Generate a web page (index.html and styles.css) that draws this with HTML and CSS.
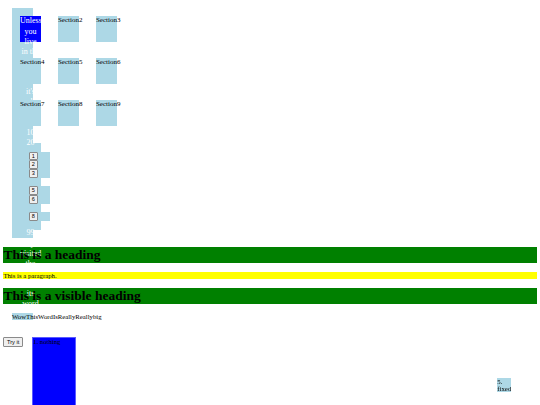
FILE: index.html
```html
<!DOCTYPE html>
<html>
<head>
<meta charset="utf-8">
<title>Layout tests</title>
<link rel="stylesheet" href="styles.css">
</head>
<body>
<div class="box col">
  <div class="grid">
    <div class="cell first">Unless<br>you<br>live<br>in the<br>Netherlands<br>or<br>nearby<br>it's<br>probably<br>not<br>between<br>10<br>20<br><br><br><br><br><br><br><br><br>99<br>days<br>visited<br>the<br><br><br>its<br>word</div>
    <div class="cell">Section2</div>
    <div class="cell">Section3</div>
    <div class="cell">Section4</div>
    <div class="cell">Section5</div>
    <div class="cell">Section6</div>
    <div class="cell">Section7</div>
    <div class="cell">Section8</div>
    <div class="cell">Section9</div>
  </div>
  <div class="lists">
    <div class="group"><button class="num">1</button><button class="num">2</button><button class="num">3</button></div>
    <div class="group"><button class="num">5</button><button class="num">6</button></div>
    <div class="group"><button class="num">8</button></div>
  </div>
</div>
<h1 class="heading">This is a heading</h1>
<p class="para">This is a paragraph.</p>
<h1 class="heading">This is a visible heading</h1>
<div class="box word">WowThisWordIsReallyReallybig</div>
<div class="demo"><button class="try">Try it</button> <div class="blue">1. nothing</div></div>
<div class="fixed">5. fixed</div>
</body>
</html>
```
FILE: styles.css
```css
html {
  background: #ffffff;
}
body {
  margin: 0;
  padding: 3.375px;
  font-family: "Liberation Serif", "Times New Roman", serif;
  font-size: 6.75px;
  color: #000000;
}
.box {
  margin-left: 8.6px;
  width: 21px;
  background: #add8e6;
}
.col {
  margin-top: 4.6px;
  padding: 8.5px 0 8px 0;
  color: #ffffff;
}
.grid {
  margin-left: 8px;
  display: grid;
  grid-template-columns: repeat(3, 21px);
  grid-auto-rows: 26px;
  column-gap: 17px;
  row-gap: 16px;
}
.cell {
  background: #add8e6;
  color: #000000;
  font-size: 7px;
  line-height: 8px;
  white-space: nowrap;
}
.cell.first {
  background: #0000ff;
  color: #ffffff;
  font-size: 8px;
  line-height: 10.1px;
  text-align: center;
  white-space: normal;
}
.lists {
  margin-top: 16.5px;
  width: 29px;
  background: #add8e6;
  padding: 8.7px 0;
  display: flex;
  flex-direction: column;
  gap: 8.7px;
}
.group {
  width: 38px;
  padding-left: 17px;
  box-sizing: border-box;
  background: #add8e6;
}
.num {
  display: block;
  width: 8.7px;
  height: 8.7px;
  box-sizing: border-box;
  margin: 0;
  padding: 0;
  font-family: "Liberation Sans", Arial, sans-serif;
  font-size: 5.6px;
  line-height: 7px;
  color: #000000;
  background: #efefef;
  border: 0.6px solid #8a8a8a;
  border-radius: 1px;
  text-align: center;
}
.heading {
  margin: 9px 0;
  font-size: 13.5px;
  font-weight: bold;
  background: #008000;
  color: #000000;
}
.para {
  margin: 9px 0;
  background: #ffff00;
}
.word {
  margin-top: 9px;
  color: #000000;
}
.demo {
  margin-top: 17.4px;
}
.try {
  margin: 0;
  padding: 1px 2.6px;
  font-family: "Liberation Sans", Arial, sans-serif;
  font-size: 5.6px;
  color: #000000;
  background: #efefef;
  border: 0.6px solid #8a8a8a;
  border-radius: 1px;
}
.blue {
  display: inline-block;
  vertical-align: baseline;
  margin-left: 7.6px;
  width: 42px;
  height: 90px;
  background: #0000ff;
  border: 0.5px solid #5a5aff;
  color: #000000;
}
.fixed {
  position: fixed;
  right: 29px;
  bottom: 13px;
  width: 13.7px;
  background: #add8e6;
}
```
